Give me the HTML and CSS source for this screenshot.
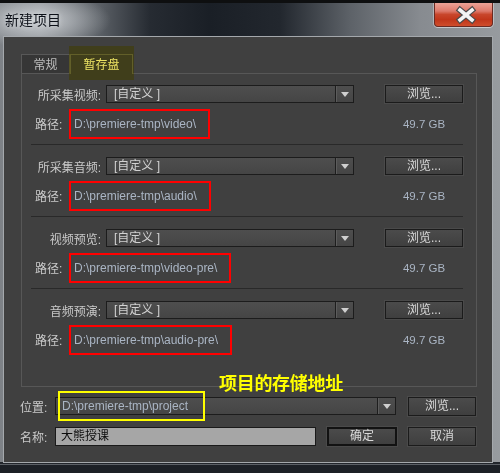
FILE: index.html
```html
<!DOCTYPE html>
<html lang="zh-CN">
<head>
<meta charset="utf-8">
<title>新建项目</title>
<link rel="stylesheet" href="styles.css">
</head>
<body>
<div class="window">
  <div class="titlebar">
    <div class="title">新建项目</div>
    <div class="close">
      <svg width="57" height="22" viewBox="0 0 57 22">
        <path d="M25 7 L37 17 M37 7 L25 17" stroke="#4a4a4a" stroke-width="6" stroke-linecap="square"/>
        <path d="M25 7 L37 17 M37 7 L25 17" stroke="#f4f4f4" stroke-width="3.6" stroke-linecap="square"/>
      </svg>
    </div>
  </div>
  <div class="content">
    <div class="tabs">
      <div class="tab">常规</div>
      <div class="tab active">暂存盘</div>
      <div class="tab-highlight"></div>
    </div>
    <div class="panel">
      <div class="group">
        <div class="row">
          <span class="label">所采集视频:</span>
          <div class="select"><span class="select-text">[自定义 ]</span><span class="select-arrow"></span></div>
          <div class="btn">浏览...</div>
        </div>
        <div class="row path-row">
          <span class="path-label">路径:</span>
          <span class="path">D:\premiere-tmp\video\</span>
          <span class="size">49.7 GB</span>
        </div>
      </div>
      <div class="group">
        <div class="row">
          <span class="label">所采集音频:</span>
          <div class="select"><span class="select-text">[自定义 ]</span><span class="select-arrow"></span></div>
          <div class="btn">浏览...</div>
        </div>
        <div class="row path-row">
          <span class="path-label">路径:</span>
          <span class="path">D:\premiere-tmp\audio\</span>
          <span class="size">49.7 GB</span>
        </div>
      </div>
      <div class="group">
        <div class="row">
          <span class="label">视频预览:</span>
          <div class="select"><span class="select-text">[自定义 ]</span><span class="select-arrow"></span></div>
          <div class="btn">浏览...</div>
        </div>
        <div class="row path-row">
          <span class="path-label">路径:</span>
          <span class="path">D:\premiere-tmp\video-pre\</span>
          <span class="size">49.7 GB</span>
        </div>
      </div>
      <div class="group">
        <div class="row">
          <span class="label">音频预演:</span>
          <div class="select"><span class="select-text">[自定义 ]</span><span class="select-arrow"></span></div>
          <div class="btn">浏览...</div>
        </div>
        <div class="row path-row">
          <span class="path-label">路径:</span>
          <span class="path">D:\premiere-tmp\audio-pre\</span>
          <span class="size">49.7 GB</span>
        </div>
      </div>
    </div>
    <div class="note">项目的存储地址</div>
    <div class="bottom-row loc-row">
      <span class="bottom-label">位置:</span>
      <div class="select loc-select"><span class="select-text loc-text">D:\premiere-tmp\project</span><span class="select-arrow"></span></div>
      <div class="btn btn-small">浏览...</div>
      <div class="yellow-box"></div>
    </div>
    <div class="bottom-row name-row">
      <span class="bottom-label">名称:</span>
      <div class="name-input">大熊授课</div>
      <div class="btn btn-ok">确定</div>
      <div class="btn btn-small">取消</div>
    </div>
  </div>
</div>
</body>
</html>
```

FILE: styles.css
```css
html, body {
  margin: 0;
  padding: 0;
  background: #000;
}

.window {
  position: relative;
  width: 500px;
  height: 473px;
  box-sizing: border-box;
  border-top: 3px solid #0e0f10;
  display: flex;
  flex-direction: column;
  font-family: "Liberation Sans", "Noto Sans CJK SC", sans-serif;
  font-size: 12px;
  color: #c9c9c9;
  background:
    linear-gradient(180deg, rgba(0,0,0,0) 0 459px, #22262c 459px 461px, #5c6066 461px 462px, #1c2026 462px),
    radial-gradient(ellipse 75px 28px at 36px 17px, rgba(206,210,214,0.95), rgba(206,210,214,0) 100%),
    linear-gradient(90deg, #7d8186 0, #8a8e93 40px, #5a5f65 100px, #262b32 150px, #1a1f26 210px, #22272e 280px, #5d6268 350px, #878b90 420px, #979b9f 500px);
}

.titlebar {
  height: 33px;
  display: flex;
  justify-content: space-between;
  align-items: flex-start;
}

.title {
  margin: 8px 0 0 5px;
  font-family: "Noto Sans CJK SC", sans-serif;
  font-size: 14px;
  line-height: 17px;
  color: #0c1018;
  text-shadow: 0 0 5px rgba(230,232,235,0.8);
}

.close {
  width: 59px;
  height: 24px;
  box-sizing: border-box;
  margin-right: 7px;
  border: 1px solid #6a2a22;
  border-top: none;
  border-radius: 0 0 4px 4px;
  background: linear-gradient(180deg, #eaa397 0%, #dd7a6b 35%, #c8462b 50%, #c1361a 72%, #cf4d2b 100%);
  box-shadow: 0 1px 0 rgba(255,255,255,0.5), 1px 0 0 rgba(255,255,255,0.35), -1px 0 0 rgba(255,255,255,0.35);
}

.close svg {
  display: block;
}

.content {
  position: relative;
  flex: 1;
  margin: 0 7px 10px 3px;
  border: 1px solid #a4a8ac;
  background: #404040;
  padding: 17px 15px 0 17px;
}

.tabs {
  position: relative;
  display: flex;
  height: 19px;
  font-family: "Noto Sans CJK SC", sans-serif;
}

.tab {
  box-sizing: border-box;
  height: 19px;
  padding: 0 11.5px;
  line-height: 17px;
  border: 1px solid #585858;
  border-bottom: none;
  background: #363636;
  color: #bdbdbd;
}

.tab.active {
  position: relative;
  z-index: 1;
  height: 20px;
  padding: 0 12.5px;
  background: #404040;
  border-color: #626262;
  color: #ececec;
}

.tab-highlight {
  position: absolute;
  z-index: 2;
  left: 48px;
  top: -8px;
  width: 65px;
  height: 34px;
  background: #fff66a;
  mix-blend-mode: multiply;
}

.panel {
  border: 1px solid #575757;
  padding: 0 13px 26px 9px;
}

.group {
  padding-top: 12px;
  border-bottom: 1px solid #292929;
}

.group:first-child {
  padding-top: 11px;
}

.group:last-child {
  border-bottom: none;
}

.row {
  display: flex;
  align-items: center;
  height: 18px;
}

.label {
  width: 75px;
  box-sizing: border-box;
  padding-right: 5px;
  text-align: right;
  white-space: nowrap;
}

.select {
  display: flex;
  align-items: stretch;
  width: 248px;
  height: 18px;
  box-sizing: border-box;
  border: 1px solid #1c1c1c;
  background: linear-gradient(180deg, #4e4e4e, #454545);
}

.select-text {
  flex: 1;
  padding-left: 7px;
  line-height: 16px;
  color: #d2d2d2;
  white-space: nowrap;
}

.select-arrow {
  position: relative;
  width: 17px;
  border-left: 1px solid #1e1e1e;
  box-shadow: inset 1px 0 0 #5c5c5c;
}

.select-arrow::before {
  content: "";
  position: absolute;
  left: 5px;
  top: 6px;
  border-left: 4px solid transparent;
  border-right: 4px solid transparent;
  border-top: 5px solid #cfcfcf;
}

.btn {
  box-sizing: border-box;
  margin-left: auto;
  width: 78px;
  height: 18px;
  border: 1px solid #1b1b1b;
  background: linear-gradient(180deg, #4b4b4b, #3f3f3f);
  color: #dadada;
  text-align: center;
  line-height: 16px;
  box-shadow: 0 0 0 1px #4a4a4a;
}

.path-row {
  height: 41px;
}

.path-label {
  width: 38px;
  box-sizing: border-box;
  padding-left: 4px;
  white-space: nowrap;
}

.path {
  display: flex;
  align-items: center;
  box-sizing: border-box;
  height: 30px;
  padding: 0 12px 0 3px;
  border: 2px solid #ff0000;
  color: #aab5c4;
  white-space: nowrap;
}

.size {
  margin-left: auto;
  width: 78px;
  text-align: center;
  font-size: 11.5px;
  color: #aab5c4;
}

.note {
  position: absolute;
  left: 215px;
  top: 335px;
  font-family: "Noto Sans CJK SC", sans-serif;
  font-weight: bold;
  font-size: 18px;
  line-height: 20px;
  letter-spacing: -0.3px;
  color: #ffff00;
}

.bottom-row {
  position: relative;
  display: flex;
  align-items: center;
  margin: 0 1px 0 -1px;
}

.loc-row {
  height: 18px;
  margin-top: 10px;
}

.name-row {
  height: 19px;
  margin-top: 12px;
}

.bottom-label {
  width: 35px;
  white-space: nowrap;
}

.loc-select {
  width: 341px;
}

.loc-text {
  padding-left: 6px;
  color: #aab5c4;
}

.btn-small {
  width: 68px;
  height: 19px;
  line-height: 17px;
}

.yellow-box {
  position: absolute;
  left: 38px;
  top: -6px;
  width: 147px;
  height: 30px;
  box-sizing: border-box;
  border: 2px solid #ffff00;
}

.name-input {
  box-sizing: border-box;
  width: 261px;
  height: 19px;
  padding-left: 5px;
  border: 1px solid #1a1a1a;
  background: #a6a6a6;
  color: #0c0c0c;
  line-height: 17px;
}

.btn-ok {
  margin-left: 11px;
  width: 70px;
  height: 19px;
  border: 2px solid #121212;
  line-height: 15px;
}
```
